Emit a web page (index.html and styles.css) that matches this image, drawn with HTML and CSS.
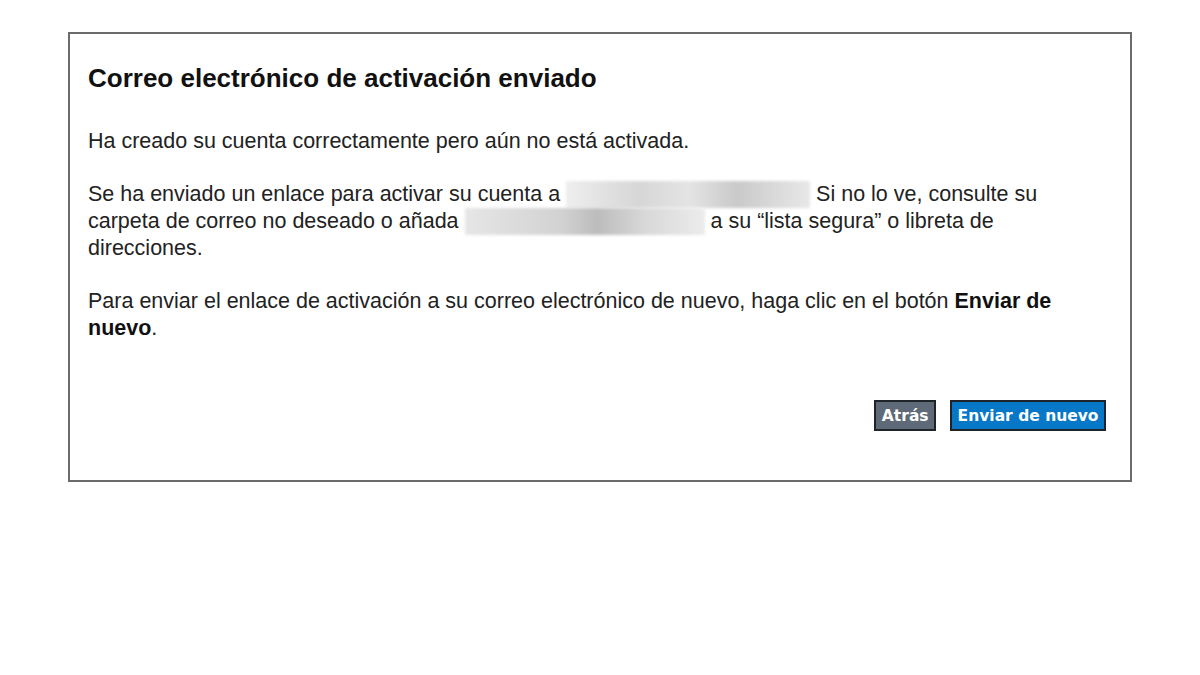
FILE: index.html
```html
<!DOCTYPE html>
<html lang="es">
<head>
  <meta charset="utf-8" />
  <title>Correo electrónico de activación enviado</title>
  <link rel="stylesheet" href="styles.css">
</head>
<body>
<div class="panel">
  <h1>Correo electrónico de activación enviado</h1>
  <p>Ha creado su cuenta correctamente pero aún no está activada.</p>
  <p>Se ha enviado un enlace para activar su cuenta a <span class="hidden first"></span> Si no lo ve, consulte su carpeta de correo no deseado o añada <span class="hidden second"></span> a su “lista segura” o libreta de direcciones.</p>
  <p>Para enviar el enlace de activación a su correo electrónico de nuevo, haga clic en el botón <b>Enviar de nuevo</b>.</p>
  <div class="actions">
    <button class="btn back">Atrás</button>
    <button class="btn resend">Enviar de nuevo</button>
  </div>
</div>
</body>
</html>
```

FILE: styles.css
```css
* { margin: 0; padding: 0; box-sizing: border-box; }
body { background: #fff; color: #222; font-family: "Liberation Sans", Arial, sans-serif; padding: 32px 68px 0; }
.panel { width: 1064px; height: 450px; border: 2px solid #6b6b6b; padding: 29px 24px 0 18px; }
.panel h1 { font-size: 26px; font-weight: bold; color: #111; line-height: 30px; margin-bottom: 35px; }
.panel p { font-size: 21.5px; line-height: 26.5px; margin-bottom: 26.5px; max-width: 1000px; }
.panel p b { color: #111; }
/* redacted e-mail addresses */
.hidden { display: inline-block; filter: blur(1.5px); vertical-align: -7px; height: 27px; }
.hidden.first { width: 244px; background: linear-gradient(90deg, #eee, #d6d6d6 30%, #e4e4e4 50%, #c9c9c9 70%, #e8e8e8); }
.hidden.second { width: 240px; background: linear-gradient(90deg, #e6e6e6, #d2d2d2 40%, #bcbcbc 55%, #d8d8d8 75%, #ececec); }
.actions { display: flex; justify-content: flex-end; gap: 14px; margin-top: 59px; }
.btn { font-family: "DejaVu Sans", Verdana, sans-serif; font-weight: bold; font-size: 15.5px; color: #fff; border: 2px solid #1e2429; height: 31px; padding: 0 5.5px; cursor: pointer; }
.back { background: #5e6a77; }
.resend { background: #0778c8; }
```
